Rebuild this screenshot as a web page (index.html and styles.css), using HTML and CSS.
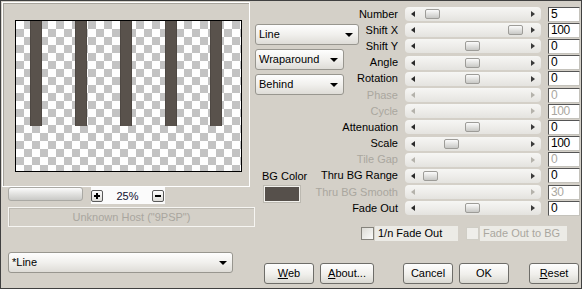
FILE: index.html
```html
<!DOCTYPE html>
<html lang="en">
<head>
  <meta charset="UTF-8" />
  <title>Line Filter</title>
  <link rel="stylesheet" href="styles.css">
</head>
<body>

  <div class="dialog">
    <div class="main">

      <!-- Preview column -->
      <div class="preview-col">
        <div class="preview">
          <div class="canvas">
            <div class="bars">
              <span class="bar"></span>
              <span class="bar"></span>
              <span class="bar"></span>
              <span class="bar"></span>
              <span class="bar"></span>
            </div>
          </div>
        </div>

        <div class="zoom-row">
          <div class="zoom-track"></div>
          <div class="zoom-box">
            <span class="zbtn plus"></span>
            <span class="zoom-val">25%</span>
            <span class="zbtn minus"></span>
          </div>
        </div>

        <div class="status">Unknown Host ("9PSP")</div>
      </div>

      <!-- Controls -->
      <div class="controls">
        <div class="controls-top">
          <div class="mid">
            <div class="combo combo-wide">Line</div>
            <div class="combo">Wraparound</div>
            <div class="combo">Behind</div>
            <div class="bg-color">
              <div class="bg-label">BG Color</div>
              <div class="swatch"></div>
            </div>
          </div>

          <div class="params">
            <div class="lbl">Number</div>
            <div class="slider"><i class="arr-l"></i><i class="arr-r"></i><b class="thumb" style="left:20px"></b></div>
            <div class="val">5</div>

            <div class="lbl">Shift X</div>
            <div class="slider"><i class="arr-l"></i><i class="arr-r"></i><b class="thumb" style="left:103px"></b></div>
            <div class="val">100</div>

            <div class="lbl">Shift Y</div>
            <div class="slider"><i class="arr-l"></i><i class="arr-r"></i><b class="thumb" style="left:60px"></b></div>
            <div class="val">0</div>

            <div class="lbl">Angle</div>
            <div class="slider"><i class="arr-l"></i><i class="arr-r"></i><b class="thumb" style="left:60px"></b></div>
            <div class="val">0</div>

            <div class="lbl">Rotation</div>
            <div class="slider"><i class="arr-l"></i><i class="arr-r"></i><b class="thumb" style="left:60px"></b></div>
            <div class="val">0</div>

            <div class="lbl off">Phase</div>
            <div class="slider off"><i class="arr-l"></i><i class="arr-r"></i></div>
            <div class="val off">0</div>

            <div class="lbl off">Cycle</div>
            <div class="slider off"><i class="arr-l"></i><i class="arr-r"></i></div>
            <div class="val off">100</div>

            <div class="lbl">Attenuation</div>
            <div class="slider"><i class="arr-l"></i><i class="arr-r"></i><b class="thumb" style="left:60px"></b></div>
            <div class="val">0</div>

            <div class="lbl">Scale</div>
            <div class="slider"><i class="arr-l"></i><i class="arr-r"></i><b class="thumb" style="left:39px"></b></div>
            <div class="val">100</div>

            <div class="lbl off">Tile Gap</div>
            <div class="slider off"><i class="arr-l"></i><i class="arr-r"></i></div>
            <div class="val off">0</div>

            <div class="lbl">Thru BG Range</div>
            <div class="slider"><i class="arr-l"></i><i class="arr-r"></i><b class="thumb" style="left:18px"></b></div>
            <div class="val">0</div>

            <div class="lbl off">Thru BG Smooth</div>
            <div class="slider off"><i class="arr-l"></i><i class="arr-r"></i></div>
            <div class="val off">30</div>

            <div class="lbl">Fade Out</div>
            <div class="slider"><i class="arr-l"></i><i class="arr-r"></i><b class="thumb" style="left:60px"></b></div>
            <div class="val">0</div>
          </div>
        </div>

        <div class="checks">
          <span class="chk"></span>
          <span class="chk-label">1/n Fade Out</span>
          <span class="chk off"></span>
          <span class="chk-label off">Fade Out to BG</span>
        </div>
      </div>
    </div>

    <!-- Footer: preset combo and dialog buttons -->
    <div class="footer">
      <div class="combo combo-preset">*Line</div>
      <div class="btn btn-web"><u>W</u>eb</div>
      <div class="btn btn-about"><u>A</u>bout...</div>
      <div class="btn btn-cancel">Cancel</div>
      <div class="btn btn-ok">OK</div>
      <div class="btn btn-reset"><u>R</u>eset</div>
    </div>
  </div>

</body>
</html>
```

FILE: styles.css
```css
body {
  margin: 0;
  background: #d4d0c8;
  font-family: "Liberation Sans", Arial, sans-serif;
  font-size: 11px;
  color: #000;
}

.dialog {
  width: 582px;
  height: 289px;
  box-sizing: border-box;
  border: 1px solid #404040;
  display: flex;
  flex-direction: column;
  overflow: hidden;
}

.main {
  display: flex;
  flex: 1;
}

/* Preview */
.preview-col {
  width: 254px;
  flex: none;
}

.preview {
  width: 248px;
  height: 185px;
  box-sizing: border-box;
  margin: 1px 0 0 1px;
  padding: 17px 0 0 12px;
  border: 1px solid;
  border-color: #fff #fff #fff #fff;
  box-shadow: inset 1px 1px #a7a49c;
}

.canvas {
  width: 227px;
  height: 152px;
  box-sizing: border-box;
  border: 1px solid #000;
  background: repeating-conic-gradient(#c3c3c3 0 25%, #fff 0 50%) 0 0 / 16px 16px;
}

.bars {
  display: flex;
  gap: 33px;
  padding-left: 14px;
}

.bar {
  width: 12px;
  height: 105px;
  background: #59524c;
  box-shadow: inset 1px 0 #4e4843, inset -1px 0 #4e4843;
}

.zoom-row {
  display: flex;
  align-items: flex-start;
  margin-left: 7px;
}

.zoom-track {
  width: 75px;
  height: 14px;
  box-sizing: border-box;
  border: 1px solid #aaa9a4;
  border-radius: 3px;
  background: linear-gradient(#fcfcfc, #e4e4e2 45%, #c9c9c6);
}

.zoom-box {
  margin-left: 8px;
  width: 74px;
  height: 17px;
  box-sizing: border-box;
  padding-right: 1px;
  background: #fbfbfb;
  display: flex;
  align-items: center;
  justify-content: space-between;
}

.zoom-val {
  font-size: 11px;
  color: #101030;
}

.zbtn {
  position: relative;
  width: 12px;
  height: 12px;
  box-sizing: border-box;
  border: 1px solid #5a5a5a;
  border-radius: 2px;
  background: linear-gradient(#fdfdfd, #dddcd8);
}

.zbtn::before {
  content: "";
  position: absolute;
  left: 2px;
  top: 4px;
  width: 6px;
  height: 2px;
  background: #000;
}

.plus::after {
  content: "";
  position: absolute;
  left: 4px;
  top: 2px;
  width: 2px;
  height: 6px;
  background: #000;
}

.status {
  margin: 3px 0 0 7px;
  width: 247px;
  height: 20px;
  box-sizing: border-box;
  border: 1px solid;
  border-color: #f6f5f2 #f6f5f2 #f6f5f2 #f6f5f2;
  box-shadow: inset 1px 1px #bdbab2;
  color: #a9a69f;
  text-align: center;
  line-height: 18px;
  font-size: 11px;
}

/* Controls */
.controls {
  flex: 1;
  display: flex;
  flex-direction: column;
}

.controls-top {
  display: flex;
}

.mid {
  width: 104px;
  flex: none;
  padding-top: 23px;
  display: flex;
  flex-direction: column;
}

.combo {
  position: relative;
  width: 89px;
  height: 21px;
  box-sizing: border-box;
  margin-bottom: 4px;
  padding-left: 3px;
  border: 1px solid #98968f;
  border-radius: 3px;
  background: linear-gradient(#fefefe, #f1f0ed 50%, #dedcd7);
  line-height: 19px;
}

.combo::after {
  content: "";
  position: absolute;
  right: 5px;
  top: 8px;
  border-top: 4px solid #000;
  border-left: 4px solid transparent;
  border-right: 4px solid transparent;
}

.combo-wide {
  width: 104px;
}

.bg-color {
  margin-top: 70px;
  padding-left: 7px;
}

.bg-label {
  line-height: 14px;
}

.swatch {
  margin: 3px 0 0 2px;
  width: 36px;
  height: 16px;
  box-sizing: border-box;
  border: 1px solid #f2f1ed;
  background: #56504b;
  box-shadow: 0 0 0 1px #bcb9b1;
}

.params {
  flex: 1;
  display: grid;
  grid-template-columns: minmax(0, 1fr) 136px 32px;
  grid-auto-rows: 16.2px;
  column-gap: 7px;
  align-items: center;
  padding: 5px 1px 0 0;
}

.lbl {
  justify-self: end;
  white-space: nowrap;
  line-height: 13px;
}

.lbl.off,
.val.off,
.chk-label.off {
  color: #aaa79f;
}

.slider {
  position: relative;
  height: 14px;
  box-sizing: border-box;
  padding: 0 6px;
  border-radius: 4px;
  background: linear-gradient(#f6f6f4, #eeedea 50%, #e4e3df);
  display: flex;
  align-items: center;
  justify-content: space-between;
}

.arr-l {
  border-right: 4px solid #2a2a2a;
  border-top: 3.5px solid transparent;
  border-bottom: 3.5px solid transparent;
}

.arr-r {
  border-left: 4px solid #3a3a3a;
  border-top: 3.5px solid transparent;
  border-bottom: 3.5px solid transparent;
}

.slider.off .arr-l,
.slider.off .arr-r {
  border-left-color: #b4b2ab;
  border-right-color: #b4b2ab;
}

.thumb {
  position: absolute;
  top: 2px;
  width: 15px;
  height: 10px;
  box-sizing: border-box;
  border: 1px solid #9d9c98;
  border-radius: 2px;
  background: linear-gradient(#fbfbfb, #e2e2e0 50%, #c8c8c5);
}

.val {
  height: 15px;
  box-sizing: border-box;
  border: 1px solid;
  border-color: #555 #c4c2bb #c4c2bb #555;
  background: #fff;
  padding-left: 2px;
  font-size: 12px;
  letter-spacing: -0.4px;
  line-height: 13px;
}

.checks {
  display: flex;
  align-items: center;
  margin-top: 10px;
  padding-left: 106px;
}

.chk {
  width: 13px;
  height: 13px;
  box-sizing: border-box;
  border: 1px solid #85837c;
  background: linear-gradient(135deg, #dcdbd5, #fbfbfa);
}

.chk.off {
  margin-left: 8px;
  border-color: #d0cec6;
  background: #efeeea;
}

.chk-label {
  margin-left: 1px;
  width: 83px;
  height: 15px;
  box-sizing: border-box;
  padding-left: 3px;
  background: #ecebe6;
  line-height: 15px;
  white-space: nowrap;
}

.chk-label.off {
  width: 87px;
}

/* Footer */
.footer {
  display: flex;
  align-items: flex-end;
  height: 36px;
  box-sizing: border-box;
  padding: 0 0 4px 7px;
}

.combo-preset {
  width: 225px;
  margin-bottom: 11px;
}

.btn {
  width: 50px;
  height: 21px;
  box-sizing: border-box;
  border: 1px solid #6e6d69;
  border-radius: 3px;
  background: linear-gradient(#fefefe, #f0efeb 55%, #d9d8d2);
  text-align: center;
  line-height: 19px;
}

.btn-web { margin-left: 31px; }
.btn-about { margin-left: 6px; width: 54px; }
.btn-cancel { margin-left: 29px; }
.btn-ok { margin-left: 6px; }
.btn-reset { margin-left: 20px; }
```
